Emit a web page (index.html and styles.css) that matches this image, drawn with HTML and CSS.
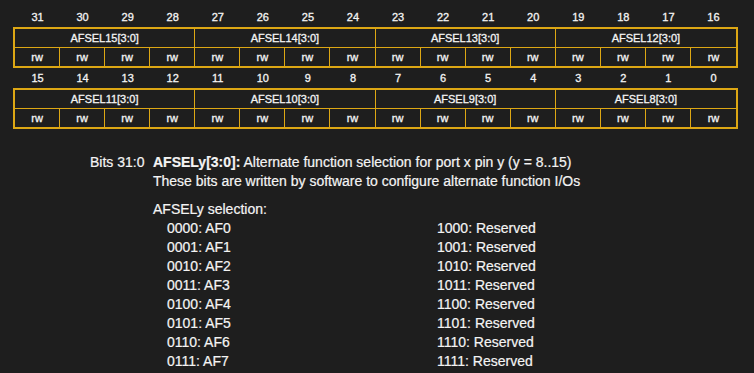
FILE: index.html
```html
<!DOCTYPE html>
<html>
<head>
<meta charset="utf-8">
<link rel="stylesheet" href="styles.css">
</head>
<body>
<div class="page">
  <div class="block">
    <div class="nums">
      <span>31</span><span>30</span><span>29</span><span>28</span><span>27</span><span>26</span><span>25</span><span>24</span><span>23</span><span>22</span><span>21</span><span>20</span><span>19</span><span>18</span><span>17</span><span>16</span>
    </div>
    <div class="reg">
      <div class="name">AFSEL15[3:0]</div><div class="name">AFSEL14[3:0]</div><div class="name">AFSEL13[3:0]</div><div class="name last">AFSEL12[3:0]</div>
      <div class="rw">rw</div><div class="rw">rw</div><div class="rw">rw</div><div class="rw">rw</div>
      <div class="rw">rw</div><div class="rw">rw</div><div class="rw">rw</div><div class="rw">rw</div>
      <div class="rw">rw</div><div class="rw">rw</div><div class="rw">rw</div><div class="rw">rw</div>
      <div class="rw">rw</div><div class="rw">rw</div><div class="rw">rw</div><div class="rw last">rw</div>
    </div>
  </div>
  <div class="block">
    <div class="nums">
      <span>15</span><span>14</span><span>13</span><span>12</span><span>11</span><span>10</span><span>9</span><span>8</span><span>7</span><span>6</span><span>5</span><span>4</span><span>3</span><span>2</span><span>1</span><span>0</span>
    </div>
    <div class="reg">
      <div class="name">AFSEL11[3:0]</div><div class="name">AFSEL10[3:0]</div><div class="name">AFSEL9[3:0]</div><div class="name last">AFSEL8[3:0]</div>
      <div class="rw">rw</div><div class="rw">rw</div><div class="rw">rw</div><div class="rw">rw</div>
      <div class="rw">rw</div><div class="rw">rw</div><div class="rw">rw</div><div class="rw">rw</div>
      <div class="rw">rw</div><div class="rw">rw</div><div class="rw">rw</div><div class="rw">rw</div>
      <div class="rw">rw</div><div class="rw">rw</div><div class="rw">rw</div><div class="rw last">rw</div>
    </div>
  </div>

  <div class="desc">
    <div class="label">Bits 31:0</div>
    <div class="body">
      <div><b>AFSELy[3:0]:</b> Alternate function selection for port x pin y (y = 8..15)</div>
      <div>These bits are written by software to configure alternate function I/Os</div>
      <div class="sel">AFSELy selection:</div>
      <div class="list">
        <div class="col">
          <div>0000: AF0</div>
          <div>0001: AF1</div>
          <div>0010: AF2</div>
          <div>0011: AF3</div>
          <div>0100: AF4</div>
          <div>0101: AF5</div>
          <div>0110: AF6</div>
          <div>0111: AF7</div>
        </div>
        <div class="col">
          <div>1000: Reserved</div>
          <div>1001: Reserved</div>
          <div>1010: Reserved</div>
          <div>1011: Reserved</div>
          <div>1100: Reserved</div>
          <div>1101: Reserved</div>
          <div>1110: Reserved</div>
          <div>1111: Reserved</div>
        </div>
      </div>
    </div>
  </div>
</div>
</body>
</html>
```

FILE: styles.css
```css
html, body {
  margin: 0;
  padding: 0;
  background: #1e1e1e;
}
body {
  width: 754px;
  height: 373px;
  overflow: hidden;
  font-family: "Liberation Sans", Arial, sans-serif;
  color: #f4f4f4;
}
.page {
  padding-top: 7px;
}
.block {
  margin-left: 13px;
  width: 725px;
}
.nums {
  display: grid;
  grid-template-columns: repeat(16, 1fr);
  padding: 0 2px;
  height: 20px;
  line-height: 20px;
  font-size: 11px;
  text-align: center;
  -webkit-text-stroke: 0.3px #f4f4f4;
}
.reg {
  box-sizing: border-box;
  width: 725px;
  display: grid;
  grid-template-columns: repeat(16, 1fr);
  border: 2px solid #dda714;
  font-size: 11px;
  text-align: center;
  -webkit-text-stroke: 0.3px #f4f4f4;
}
.name {
  grid-column: span 4;
  height: 18px;
  line-height: 18px;
  border-right: 1px solid #dda714;
  border-bottom: 1px solid #dda714;
}
.rw {
  height: 18px;
  line-height: 18px;
  border-right: 1px solid #dda714;
}
.last {
  border-right: none;
}
.desc {
  display: flex;
  margin-top: 24px;
  margin-left: 90px;
  font-size: 14px;
  line-height: 19px;
  -webkit-text-stroke: 0.2px #f4f4f4;
}
.label {
  width: 63px;
  flex: none;
}
.body b {
  font-weight: bold;
}
.sel {
  margin-top: 9px;
}
.list {
  display: flex;
  padding-left: 14px;
}
.col:first-child {
  width: 270px;
}
```
